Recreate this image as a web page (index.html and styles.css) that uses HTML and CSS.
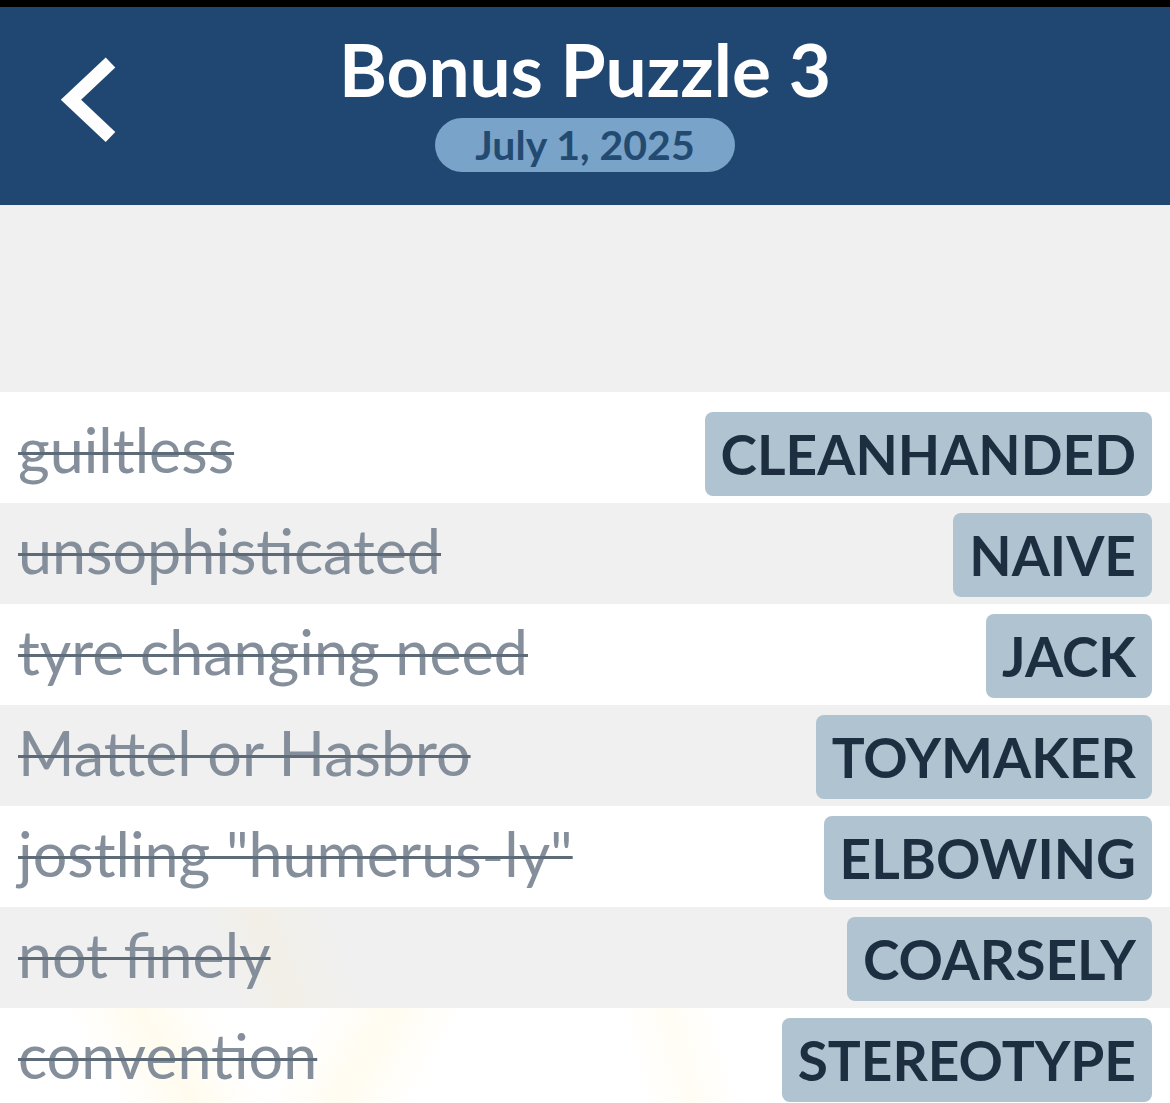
FILE: index.html
```html
<!DOCTYPE html>
<html lang="en">
<head>
  <meta charset="UTF-8" />
  <meta name="viewport" content="width=device-width, initial-scale=1.0"/>
  <title>Bonus Puzzle 3</title>
  <link rel="stylesheet" href="styles.css">
</head>
<body>
  <header class="topbar">
    <a class="back" href="#" aria-label="Back">
      <svg width="70" height="100" viewBox="0 0 70 100">
        <polyline points="54.5,12.5 15,49.75 54.5,87" fill="none" stroke="#fff" stroke-width="14"/>
      </svg>
    </a>
    <div class="heading">
      <h1>Bonus Puzzle 3</h1>
      <span class="date">July 1, 2025</span>
    </div>
  </header>

  <div class="spacer"></div>

  <ul class="clues">
    <li class="clue"><span class="hint">guiltless</span><span class="answer">CLEANHANDED</span></li>
    <li class="clue"><span class="hint">unsophisticated</span><span class="answer">NAIVE</span></li>
    <li class="clue"><span class="hint">tyre changing need</span><span class="answer">JACK</span></li>
    <li class="clue"><span class="hint">Mattel or Hasbro</span><span class="answer">TOYMAKER</span></li>
    <li class="clue"><span class="hint">jostling "humerus-ly"</span><span class="answer">ELBOWING</span></li>
    <li class="clue"><span class="hint">not finely</span><span class="answer">COARSELY</span></li>
    <li class="clue"><span class="hint">convention</span><span class="answer">STEREOTYPE</span></li>
  </ul>
</body>
</html>
```

FILE: styles.css
```css
body {
  margin: 0;
  font-family: Lato, "Open Sans", sans-serif;
  background: #f0f0f0;
  overflow: hidden;
}

.topbar {
  position: relative;
  height: 198px;
  background: #1f4771;
  border-top: 7px solid #000;
  display: flex;
  justify-content: center;
}

.back {
  position: absolute;
  left: 56px;
  top: 43px;
  display: block;
}

.heading {
  display: flex;
  flex-direction: column;
  align-items: center;
  padding-top: 22px;
}

h1 {
  margin: 0;
  color: #fff;
  font-size: 73px;
  font-weight: 700;
  line-height: 80px;
}

.date {
  margin-top: 9px;
  padding: 0 40px;
  height: 54px;
  line-height: 54px;
  border-radius: 27px;
  background: #79a3c8;
  color: #234a70;
  font-size: 41px;
  font-weight: 700;
}

.spacer {
  height: 187px;
}

.clues {
  list-style: none;
  margin: 0;
  padding: 0;
  background: #fff;
}

.clue {
  display: flex;
  align-items: center;
  justify-content: space-between;
  height: 101px;
  padding: 0 18px;
  box-sizing: border-box;
}

.clue:first-child {
  height: 111px;
  padding-top: 10px;
}

.clue:nth-child(even) {
  background: #f0f0f0;
}

/* faint sunburst rays behind the last rows */
.clue:nth-child(6) {
  background: linear-gradient(70deg, transparent 20%, rgba(255, 236, 160, 0.12) 24%, transparent 30%), #f0f0f0;
}

.clue:last-child {
  background:
    linear-gradient(60deg, transparent 10%, rgba(255, 232, 150, 0.16) 16%, transparent 22%),
    linear-gradient(120deg, transparent 26%, rgba(255, 232, 150, 0.14) 32%, transparent 38%),
    linear-gradient(75deg, transparent 54%, rgba(255, 232, 150, 0.1) 58%, transparent 62%),
    #fff;
}

.hint {
  color: #858f9b;
  font-size: 61px;
  text-decoration: line-through;
  text-decoration-color: #5d6a77;
  text-decoration-thickness: 3px;
  margin-top: -6px;
}

.answer {
  height: 84px;
  line-height: 84px;
  padding: 0 16px;
  border-radius: 8px;
  background: #b0c3d1;
  color: #1c2e40;
  font-size: 55px;
  font-weight: 700;
  margin-top: 2px;
}
```
